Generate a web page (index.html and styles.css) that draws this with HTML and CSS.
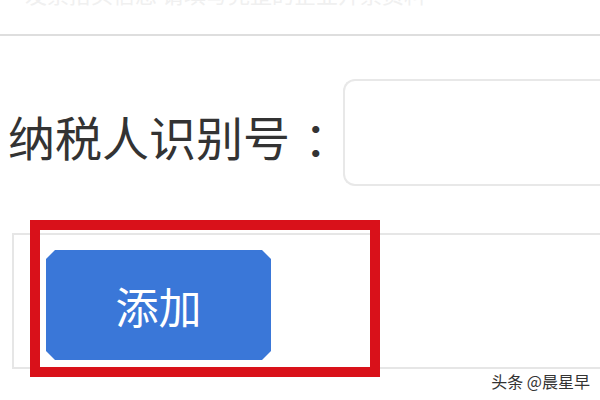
FILE: index.html
```html
<!DOCTYPE html>
<html>
<head>
  <title>纳税人识别号</title>
  <link rel="stylesheet" href="styles.css">
</head>
<body>

<div class="header">
  <div class="header-text">发票抬头信息 请填写完整的企业开票资料</div>
</div>

<div class="form-row">
  <label class="form-label" for="taxId">纳税人识别号<span class="colon">：</span></label>
  <input class="form-input" id="taxId" type="text">
</div>

<div class="table">
  <div class="table-cell">
    <button class="add-btn">添加</button>
  </div>
  <!-- red annotation frame drawn over the cell -->
  <div class="highlight"></div>
</div>

<div class="watermark">头条 @晨星早</div>

</body>
</html>
```

FILE: styles.css
```css
/* Page base */
body {
  margin: 0;
  width: 600px;
  height: 400px;
  overflow: hidden;
  background: #fff;
  font-family: "Noto Sans CJK SC", "Microsoft YaHei", sans-serif;
  position: relative;
}

/* faint heading cut off at the top */
.header {
  height: 34px;
  overflow: hidden;
  border-bottom: 2px solid #dedede;
  padding-left: 25px;
}
.header-text {
  margin-top: -20px;
  font-size: 22px;
  line-height: 26px;
  color: #f0f0f0;
}

/* label + input */
.form-row {
  display: flex;
  align-items: center;
  margin-top: 43px;
  padding-left: 8px;
}
.form-label {
  flex-shrink: 0;
  white-space: nowrap;
  font-size: 47px;
  line-height: 56px;
  color: #333;
  margin-top: 6px;
}
.colon {
  margin-left: 14px;
}
.form-input {
  flex: 1;
  min-width: 0;
  margin-left: -8px;
  height: 107px;
  box-sizing: border-box;
  border: 2px solid #e8e8e8;
  border-right: none;
  border-radius: 12px 0 0 12px;
  background: #fff;
  outline: none;
}

/* table with the add button */
.table {
  position: relative;
  margin: 47px 0 0 12px;
  border-top: 2px solid #e6e6e6;
  border-bottom: 2px solid #e6e6e6;
  border-left: 2px solid #e6e6e6;
}
.table-cell {
  padding: 15px 0 7px 32px;
}
.add-btn {
  display: block;
  width: 225px;
  height: 110px;
  border: none;
  background: #3a77d8;
  color: #fff;
  font-family: "Noto Sans CJK SC", sans-serif;
  font-size: 43px;
  padding: 0;
  clip-path: polygon(9px 0, calc(100% - 9px) 0, 100% 9px, 100% calc(100% - 9px), calc(100% - 9px) 100%, 9px 100%, 0 calc(100% - 9px), 0 9px);
  cursor: pointer;
}
.highlight {
  position: absolute;
  left: 16px;
  top: -15px;
  width: 350px;
  height: 157px;
  box-sizing: border-box;
  border: 10px solid #d9111a;
}

/* corner watermark */
.watermark {
  position: absolute;
  right: 10px;
  bottom: 7px;
  font-size: 16px;
  color: #333;
  text-shadow: 0 0 2px #fff, 1px 1px 0 #fff;
}
```
